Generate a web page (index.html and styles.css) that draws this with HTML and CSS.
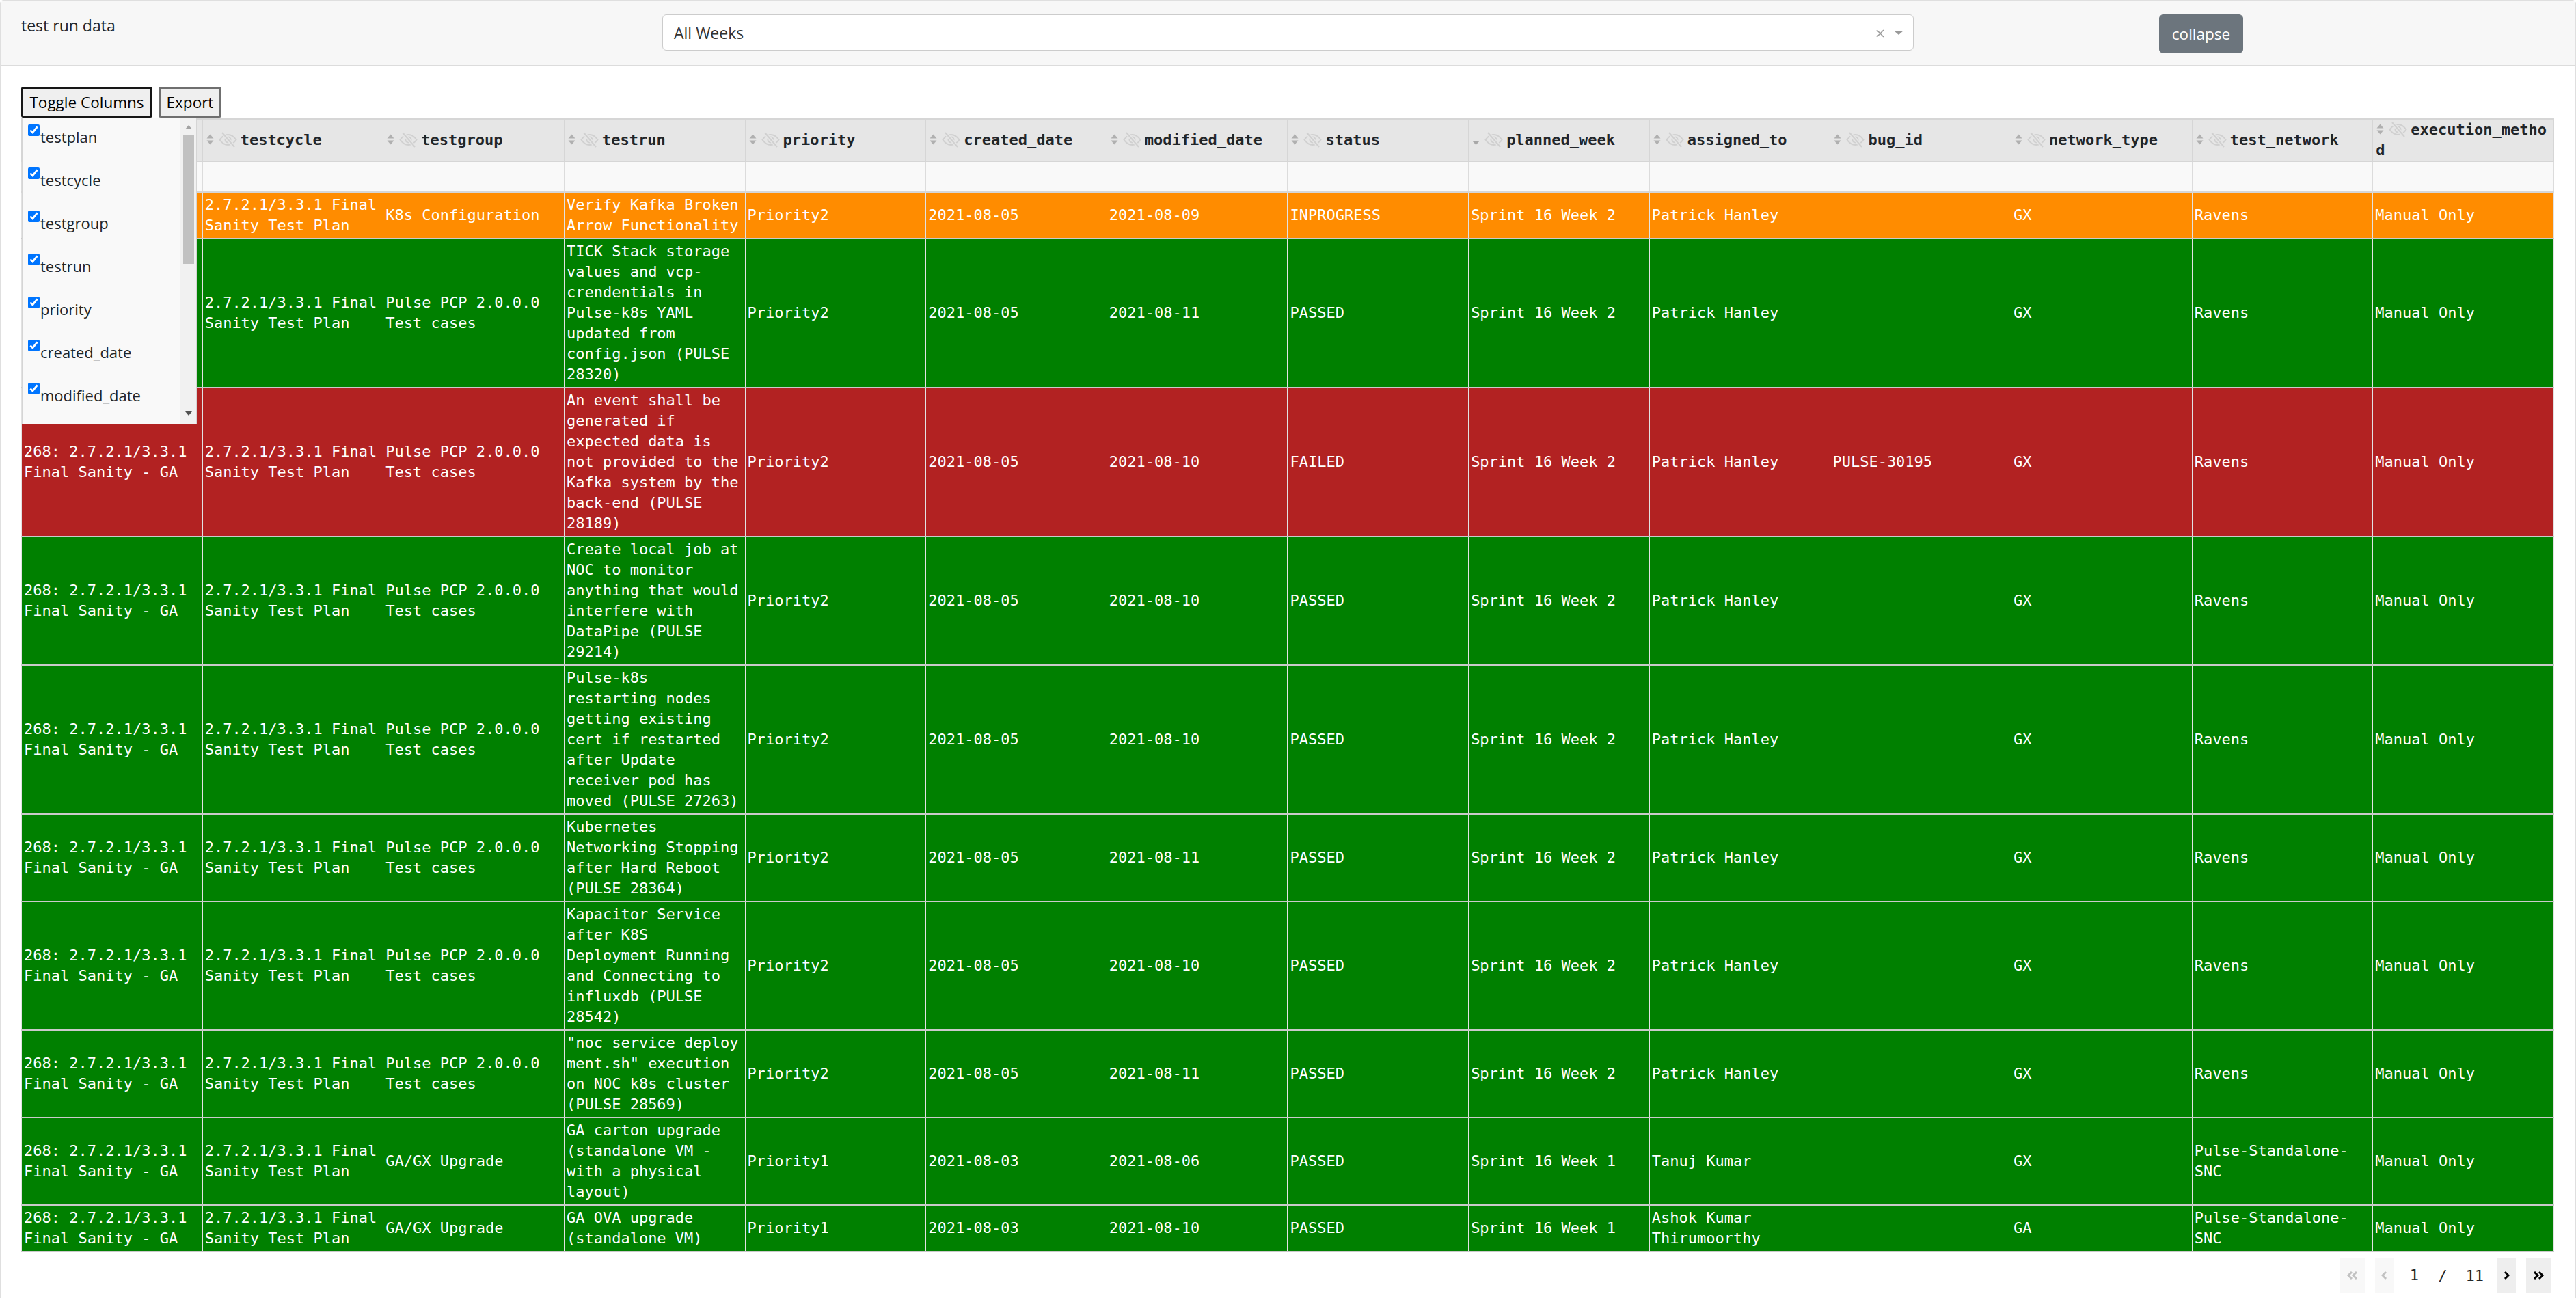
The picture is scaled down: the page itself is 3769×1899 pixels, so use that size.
FILE: index.html
```html
<!DOCTYPE html>
<html>
<head>
<meta charset="utf-8">
<title>test run data</title>
<link rel="stylesheet" href="styles.css">
</head>
<body>
<svg class="defs" width="0" height="0" aria-hidden="true">
  <symbol id="sort" viewBox="0 0 13 18">
    <path d="M6.5 1.5 L11.5 7.5 H1.5 Z" fill="#b0b0b0"/>
    <path d="M1.5 10.5 H11.5 L6.5 16.5 Z" fill="#b0b0b0"/>
  </symbol>
  <symbol id="sortdown" viewBox="0 0 13 18">
    <path d="M1 11 H12 L6.5 17 Z" fill="#a8a8a8"/>
  </symbol>
  <symbol id="eye" viewBox="0 0 29 25">
    <path d="M2.5 12.5 C6.5 6.5 10.5 5 14.5 5 C18.5 5 22.5 6.5 26.5 12.5 C22.5 18.5 18.5 20 14.5 20 C10.5 20 6.5 18.5 2.5 12.5 Z" fill="none" stroke="#d0d0d0" stroke-width="2"/>
    <circle cx="14.5" cy="12.5" r="4" fill="none" stroke="#d0d0d0" stroke-width="2"/>
    <line x1="6" y1="2" x2="24" y2="23" stroke="#e6e6e6" stroke-width="5"/>
    <line x1="6" y1="2" x2="24" y2="23" stroke="#d0d0d0" stroke-width="2"/>
  </symbol>
</svg>
<div class="card">
  <div class="card-header">
    <div class="title">test run data</div>
    <div class="select">
      <span class="select-value">All Weeks</span>
      <svg class="select-clear" width="12" height="12" viewBox="0 0 12 12"><path d="M1 1 L11 11 M11 1 L1 11" stroke="#9a9a9a" stroke-width="1.6"/></svg>
      <span class="select-arrow"></span>
    </div>
    <button class="btn-collapse">collapse</button>
  </div>
  <div class="card-body">
    <div class="toolbar">
      <button class="tb-btn tb-toggle">Toggle Columns</button>
      <button class="tb-btn tb-export">Export</button>
    </div>
    <div class="table-wrap">
      <div class="col-menu">
        <div class="col-list">
          <label class="col-item"><input type="checkbox" checked><span>testplan</span></label>
          <label class="col-item"><input type="checkbox" checked><span>testcycle</span></label>
          <label class="col-item"><input type="checkbox" checked><span>testgroup</span></label>
          <label class="col-item"><input type="checkbox" checked><span>testrun</span></label>
          <label class="col-item"><input type="checkbox" checked><span>priority</span></label>
          <label class="col-item"><input type="checkbox" checked><span>created_date</span></label>
          <label class="col-item"><input type="checkbox" checked><span>modified_date</span></label>
        </div>
        <div class="sbar">
          <span class="sbar-up"></span>
          <span class="sbar-thumb"></span>
          <span class="sbar-fill"></span>
          <span class="sbar-down"></span>
        </div>
      </div>
      <table class="grid">
        <thead>
          <tr class="head">
            <th><svg class="ic-sort"><use href="#sort"/></svg><svg class="ic-eye"><use href="#eye"/></svg>testplan</th>
            <th><svg class="ic-sort"><use href="#sort"/></svg><svg class="ic-eye"><use href="#eye"/></svg>testcycle</th>
            <th><svg class="ic-sort"><use href="#sort"/></svg><svg class="ic-eye"><use href="#eye"/></svg>testgroup</th>
            <th><svg class="ic-sort"><use href="#sort"/></svg><svg class="ic-eye"><use href="#eye"/></svg>testrun</th>
            <th><svg class="ic-sort"><use href="#sort"/></svg><svg class="ic-eye"><use href="#eye"/></svg>priority</th>
            <th><svg class="ic-sort"><use href="#sort"/></svg><svg class="ic-eye"><use href="#eye"/></svg>created_date</th>
            <th><svg class="ic-sort"><use href="#sort"/></svg><svg class="ic-eye"><use href="#eye"/></svg>modified_date</th>
            <th><svg class="ic-sort"><use href="#sort"/></svg><svg class="ic-eye"><use href="#eye"/></svg>status</th>
            <th><svg class="ic-sort"><use href="#sortdown"/></svg><svg class="ic-eye"><use href="#eye"/></svg>planned_week</th>
            <th><svg class="ic-sort"><use href="#sort"/></svg><svg class="ic-eye"><use href="#eye"/></svg>assigned_to</th>
            <th><svg class="ic-sort"><use href="#sort"/></svg><svg class="ic-eye"><use href="#eye"/></svg>bug_id</th>
            <th><svg class="ic-sort"><use href="#sort"/></svg><svg class="ic-eye"><use href="#eye"/></svg>network_type</th>
            <th><svg class="ic-sort"><use href="#sort"/></svg><svg class="ic-eye"><use href="#eye"/></svg>test_network</th>
            <th><svg class="ic-sort"><use href="#sort"/></svg><svg class="ic-eye"><use href="#eye"/></svg>execution_method</th>
          </tr>
          <tr class="filter">
            <td></td><td></td><td></td><td></td><td></td><td></td><td></td><td></td><td></td><td></td><td></td><td></td><td></td><td></td>
          </tr>
        </thead>
        <tbody>
          <tr class="r-orange">
            <td>268: 2.7.2.1/3.3.1 Final Sanity - GA</td>
            <td>2.7.2.1/3.3.1 Final Sanity Test Plan</td>
            <td>K8s Configuration</td>
            <td>Verify Kafka Broken Arrow Functionality</td>
            <td>Priority2</td>
            <td>2021-08-05</td>
            <td>2021-08-09</td>
            <td>INPROGRESS</td>
            <td>Sprint 16 Week 2</td>
            <td>Patrick Hanley</td>
            <td></td>
            <td>GX</td>
            <td>Ravens</td>
            <td>Manual Only</td>
          </tr>
          <tr class="r-green">
            <td>268: 2.7.2.1/3.3.1 Final Sanity - GA</td>
            <td>2.7.2.1/3.3.1 Final Sanity Test Plan</td>
            <td>Pulse PCP 2.0.0.0 Test cases</td>
            <td>TICK Stack storage values and vcp-crendentials in Pulse-k8s YAML updated from config.json (PULSE 28320)</td>
            <td>Priority2</td>
            <td>2021-08-05</td>
            <td>2021-08-11</td>
            <td>PASSED</td>
            <td>Sprint 16 Week 2</td>
            <td>Patrick Hanley</td>
            <td></td>
            <td>GX</td>
            <td>Ravens</td>
            <td>Manual Only</td>
          </tr>
          <tr class="r-red">
            <td>268: 2.7.2.1/3.3.1 Final Sanity - GA</td>
            <td>2.7.2.1/3.3.1 Final Sanity Test Plan</td>
            <td>Pulse PCP 2.0.0.0 Test cases</td>
            <td>An event shall be generated if expected data is not provided to the Kafka system by the back-end (PULSE 28189)</td>
            <td>Priority2</td>
            <td>2021-08-05</td>
            <td>2021-08-10</td>
            <td>FAILED</td>
            <td>Sprint 16 Week 2</td>
            <td>Patrick Hanley</td>
            <td>PULSE-30195</td>
            <td>GX</td>
            <td>Ravens</td>
            <td>Manual Only</td>
          </tr>
          <tr class="r-green">
            <td>268: 2.7.2.1/3.3.1 Final Sanity - GA</td>
            <td>2.7.2.1/3.3.1 Final Sanity Test Plan</td>
            <td>Pulse PCP 2.0.0.0 Test cases</td>
            <td>Create local job at NOC to monitor anything that would interfere with DataPipe (PULSE 29214)</td>
            <td>Priority2</td>
            <td>2021-08-05</td>
            <td>2021-08-10</td>
            <td>PASSED</td>
            <td>Sprint 16 Week 2</td>
            <td>Patrick Hanley</td>
            <td></td>
            <td>GX</td>
            <td>Ravens</td>
            <td>Manual Only</td>
          </tr>
          <tr class="r-green">
            <td>268: 2.7.2.1/3.3.1 Final Sanity - GA</td>
            <td>2.7.2.1/3.3.1 Final Sanity Test Plan</td>
            <td>Pulse PCP 2.0.0.0 Test cases</td>
            <td>Pulse-k8s restarting nodes getting existing cert if restarted after Update receiver pod has moved (PULSE 27263)</td>
            <td>Priority2</td>
            <td>2021-08-05</td>
            <td>2021-08-10</td>
            <td>PASSED</td>
            <td>Sprint 16 Week 2</td>
            <td>Patrick Hanley</td>
            <td></td>
            <td>GX</td>
            <td>Ravens</td>
            <td>Manual Only</td>
          </tr>
          <tr class="r-green">
            <td>268: 2.7.2.1/3.3.1 Final Sanity - GA</td>
            <td>2.7.2.1/3.3.1 Final Sanity Test Plan</td>
            <td>Pulse PCP 2.0.0.0 Test cases</td>
            <td>Kubernetes Networking Stopping after Hard Reboot (PULSE 28364)</td>
            <td>Priority2</td>
            <td>2021-08-05</td>
            <td>2021-08-11</td>
            <td>PASSED</td>
            <td>Sprint 16 Week 2</td>
            <td>Patrick Hanley</td>
            <td></td>
            <td>GX</td>
            <td>Ravens</td>
            <td>Manual Only</td>
          </tr>
          <tr class="r-green">
            <td>268: 2.7.2.1/3.3.1 Final Sanity - GA</td>
            <td>2.7.2.1/3.3.1 Final Sanity Test Plan</td>
            <td>Pulse PCP 2.0.0.0 Test cases</td>
            <td>Kapacitor Service after K8S Deployment Running and Connecting to influxdb (PULSE 28542)</td>
            <td>Priority2</td>
            <td>2021-08-05</td>
            <td>2021-08-10</td>
            <td>PASSED</td>
            <td>Sprint 16 Week 2</td>
            <td>Patrick Hanley</td>
            <td></td>
            <td>GX</td>
            <td>Ravens</td>
            <td>Manual Only</td>
          </tr>
          <tr class="r-green">
            <td>268: 2.7.2.1/3.3.1 Final Sanity - GA</td>
            <td>2.7.2.1/3.3.1 Final Sanity Test Plan</td>
            <td>Pulse PCP 2.0.0.0 Test cases</td>
            <td>"noc_service_deployment.sh" execution on NOC k8s cluster (PULSE 28569)</td>
            <td>Priority2</td>
            <td>2021-08-05</td>
            <td>2021-08-11</td>
            <td>PASSED</td>
            <td>Sprint 16 Week 2</td>
            <td>Patrick Hanley</td>
            <td></td>
            <td>GX</td>
            <td>Ravens</td>
            <td>Manual Only</td>
          </tr>
          <tr class="r-green">
            <td>268: 2.7.2.1/3.3.1 Final Sanity - GA</td>
            <td>2.7.2.1/3.3.1 Final Sanity Test Plan</td>
            <td>GA/GX Upgrade</td>
            <td>GA carton upgrade (standalone VM - with a physical layout)</td>
            <td>Priority1</td>
            <td>2021-08-03</td>
            <td>2021-08-06</td>
            <td>PASSED</td>
            <td>Sprint 16 Week 1</td>
            <td>Tanuj Kumar</td>
            <td></td>
            <td>GX</td>
            <td>Pulse-Standalone-SNC</td>
            <td>Manual Only</td>
          </tr>
          <tr class="r-green">
            <td>268: 2.7.2.1/3.3.1 Final Sanity - GA</td>
            <td>2.7.2.1/3.3.1 Final Sanity Test Plan</td>
            <td>GA/GX Upgrade</td>
            <td>GA OVA upgrade (standalone VM)</td>
            <td>Priority1</td>
            <td>2021-08-03</td>
            <td>2021-08-10</td>
            <td>PASSED</td>
            <td>Sprint 16 Week 1</td>
            <td>Ashok Kumar Thirumoorthy</td>
            <td></td>
            <td>GA</td>
            <td>Pulse-Standalone-SNC</td>
            <td>Manual Only</td>
          </tr>
        </tbody>
      </table>
    </div>
    <div class="pager">
      <span class="pg-btn pg-wide pg-dis"><svg width="18" height="12" viewBox="0 0 18 12"><path d="M8 1 L3 6 L8 11 M15 1 L10 6 L15 11" fill="none" stroke="currentColor" stroke-width="3"/></svg></span>
      <span class="pg-btn pg-narrow pg-dis pg-gap"><svg width="9" height="12" viewBox="0 0 9 12"><path d="M7 1 L2 6 L7 11" fill="none" stroke="currentColor" stroke-width="3"/></svg></span>
      <span class="pg-input">1</span>
      <span class="pg-sep">/</span>
      <span class="pg-total">11</span>
      <span class="pg-btn pg-narrow pg-next"><svg width="9" height="12" viewBox="0 0 9 12"><path d="M2 1 L7 6 L2 11" fill="none" stroke="currentColor" stroke-width="3"/></svg></span>
      <span class="pg-btn pg-wide pg-gap"><svg width="18" height="12" viewBox="0 0 18 12"><path d="M3 1 L8 6 L3 11 M10 1 L15 6 L10 11" fill="none" stroke="currentColor" stroke-width="3"/></svg></span>
    </div>
  </div>
</div>
</body>
</html>
```
FILE: styles.css
```css
* { box-sizing: border-box; }

body {
  margin: 0;
  font-family: "Open Sans", "Noto Sans", sans-serif;
  color: #212529;
  background: #fff;
}

.defs { position: absolute; width: 0; height: 0; overflow: hidden; }

.card {
  border: 1px solid #dfdfdf;
  border-radius: 5px;
  background: #fff;
}

.card-header {
  display: flex;
  align-items: flex-start;
  padding: 19px 30px 17px 30px;
  background: #f7f7f7;
  border-bottom: 1px solid #dcdcdc;
  border-radius: 5px 5px 0 0;
}

.title {
  width: 938px;
  flex: 0 0 938px;
  font-size: 23px;
  line-height: 30px;
  margin-top: 2px;
  color: #212529;
}

.select {
  flex: 0 0 1831px;
  width: 1831px;
  height: 53px;
  margin-top: 1px;
  border: 1.5px solid #cccccc;
  border-radius: 6px;
  background: #fff;
  display: flex;
  align-items: center;
  padding: 0 14px 0 16px;
}

.select-value {
  flex: 1;
  font-size: 23px;
  color: #333;
}

.select-clear {
  margin-right: 14px;
  margin-top: 2px;
}

.select-arrow {
  width: 0;
  height: 0;
  border-left: 7.5px solid transparent;
  border-right: 7.5px solid transparent;
  border-top: 6px solid #999;
  margin-top: 1px;
}

.btn-collapse {
  margin-left: 359px;
  margin-top: 1px;
  width: 123px;
  height: 57px;
  padding: 0;
  background: #6c757d;
  border: 1px solid #6c757d;
  border-radius: 6px;
  color: #fff;
  font-family: "Open Sans", sans-serif;
  font-size: 22.5px;
}

.card-body {
  padding: 31px 30px 30px 30px;
}

.toolbar {
  display: flex;
  gap: 9px;
  height: 46px;
  align-items: flex-start;
}

.tb-btn {
  height: 45px;
  padding: 0;
  background: #efefef;
  font-family: "Open Sans", sans-serif;
  font-size: 22.5px;
  color: #000;
  border-radius: 3px;
}

.tb-toggle {
  width: 192px;
  border: 3px solid #161616;
}

.tb-export {
  width: 92px;
  border: 3px solid #6f6f6f;
}

.table-wrap {
  position: relative;
}

/* Toggle-columns dropdown overlaying the first column */
.col-menu {
  position: absolute;
  top: 0;
  left: 1px;
  width: 256px;
  height: 448px;
  z-index: 2;
  display: flex;
  background: #f9f9f9;
  border: 1.5px solid #d5d5d5;
  border-top: none;
  overflow: hidden;
}

.col-list {
  flex: 1;
  padding: 8px 0 0 8px;
  overflow: hidden;
}

.col-item {
  display: flex;
  align-items: flex-start;
  height: 63px;
  font-size: 22px;
  line-height: 30px;
  color: #212529;
}

.col-item input {
  width: 17px;
  height: 17px;
  margin: 1px 1px 0 0;
  accent-color: #0075ff;
  flex: 0 0 auto;
}

.col-item span {
  margin-top: 4px;
}

.sbar {
  flex: 0 0 23px;
  width: 23px;
  background: #f1f1f1;
  display: flex;
  flex-direction: column;
  align-items: center;
}

.sbar-up {
  margin-top: 10px;
  width: 0;
  height: 0;
  border-left: 5px solid transparent;
  border-right: 5px solid transparent;
  border-bottom: 6px solid #a3a3a3;
}

.sbar-thumb {
  margin-top: 9px;
  width: 16px;
  height: 188px;
  background: #c1c1c1;
}

.sbar-fill { flex: 1; }

.sbar-down {
  margin-bottom: 12px;
  width: 0;
  height: 0;
  border-left: 5px solid transparent;
  border-right: 5px solid transparent;
  border-top: 6px solid #505050;
}

/* Data grid */
.grid {
  width: 3706px;
  table-layout: fixed;
  border-collapse: collapse;
  font-family: "DejaVu Sans Mono", "Liberation Mono", monospace;
  font-size: 22px;
}

.grid th {
  background: #e6e6e6;
  border: 1px solid #d6d6d6;
  border-top: 2px solid #d6d6d6;
  border-bottom: 2px solid #d6d6d6;
  padding: 0 3px 0 4px;
  height: 61px;
  line-height: 30px;
  text-align: left;
  vertical-align: middle;
  font-weight: bold;
  color: #212529;
  word-break: break-all;
}

.ic-sort {
  width: 13px;
  height: 18px;
  vertical-align: middle;
  margin: -4px 5px 0 0;
}

.ic-eye {
  width: 29px;
  height: 25px;
  vertical-align: middle;
  margin: -4px 4px 0 0;
}

.grid .filter td {
  height: 45px;
  padding: 0;
  background: #f9f9f9;
  border: 1px solid #dcdcdc;
  border-bottom: 2px solid #d6d6d6;
}

.grid tbody td {
  padding: 3px 3px;
  line-height: 30px;
  color: #fff;
  vertical-align: middle;
  overflow-wrap: break-word;
  border-left: 1px solid #e2e2e2;
  border-right: 1px solid #e2e2e2;
  border-bottom: 2px solid #cacaca;
}

.r-orange td { background: #ff8c00; }
.r-green td { background: #008000; }
.r-red td { background: #b22222; }

/* Pagination */
.pager {
  display: flex;
  justify-content: flex-end;
  align-items: center;
  height: 50px;
  margin-top: 9px;
  margin-right: 6px;
  font-family: "DejaVu Sans Mono", "Liberation Mono", monospace;
  font-size: 22px;
  color: #212529;
}

.pg-btn {
  height: 50px;
  display: flex;
  align-items: center;
  justify-content: center;
  background: #eeeeee;
  color: #000;
}

.pg-wide { width: 36px; }
.pg-narrow { width: 27px; }
.pg-gap { margin-left: 15px; }

.pg-dis {
  background: #f8f8f8;
  color: #c2c2c2;
}

.pg-input {
  width: 44px;
  height: 47px;
  margin-left: 8px;
  align-self: flex-start;
  display: flex;
  align-items: center;
  justify-content: center;
  padding-top: 3px;
  border-bottom: 1.5px solid #cfcfcf;
}

.pg-sep {
  margin-left: 13px;
}

.pg-total {
  margin-left: 27px;
}

.pg-next {
  margin-left: 20px;
}
```
